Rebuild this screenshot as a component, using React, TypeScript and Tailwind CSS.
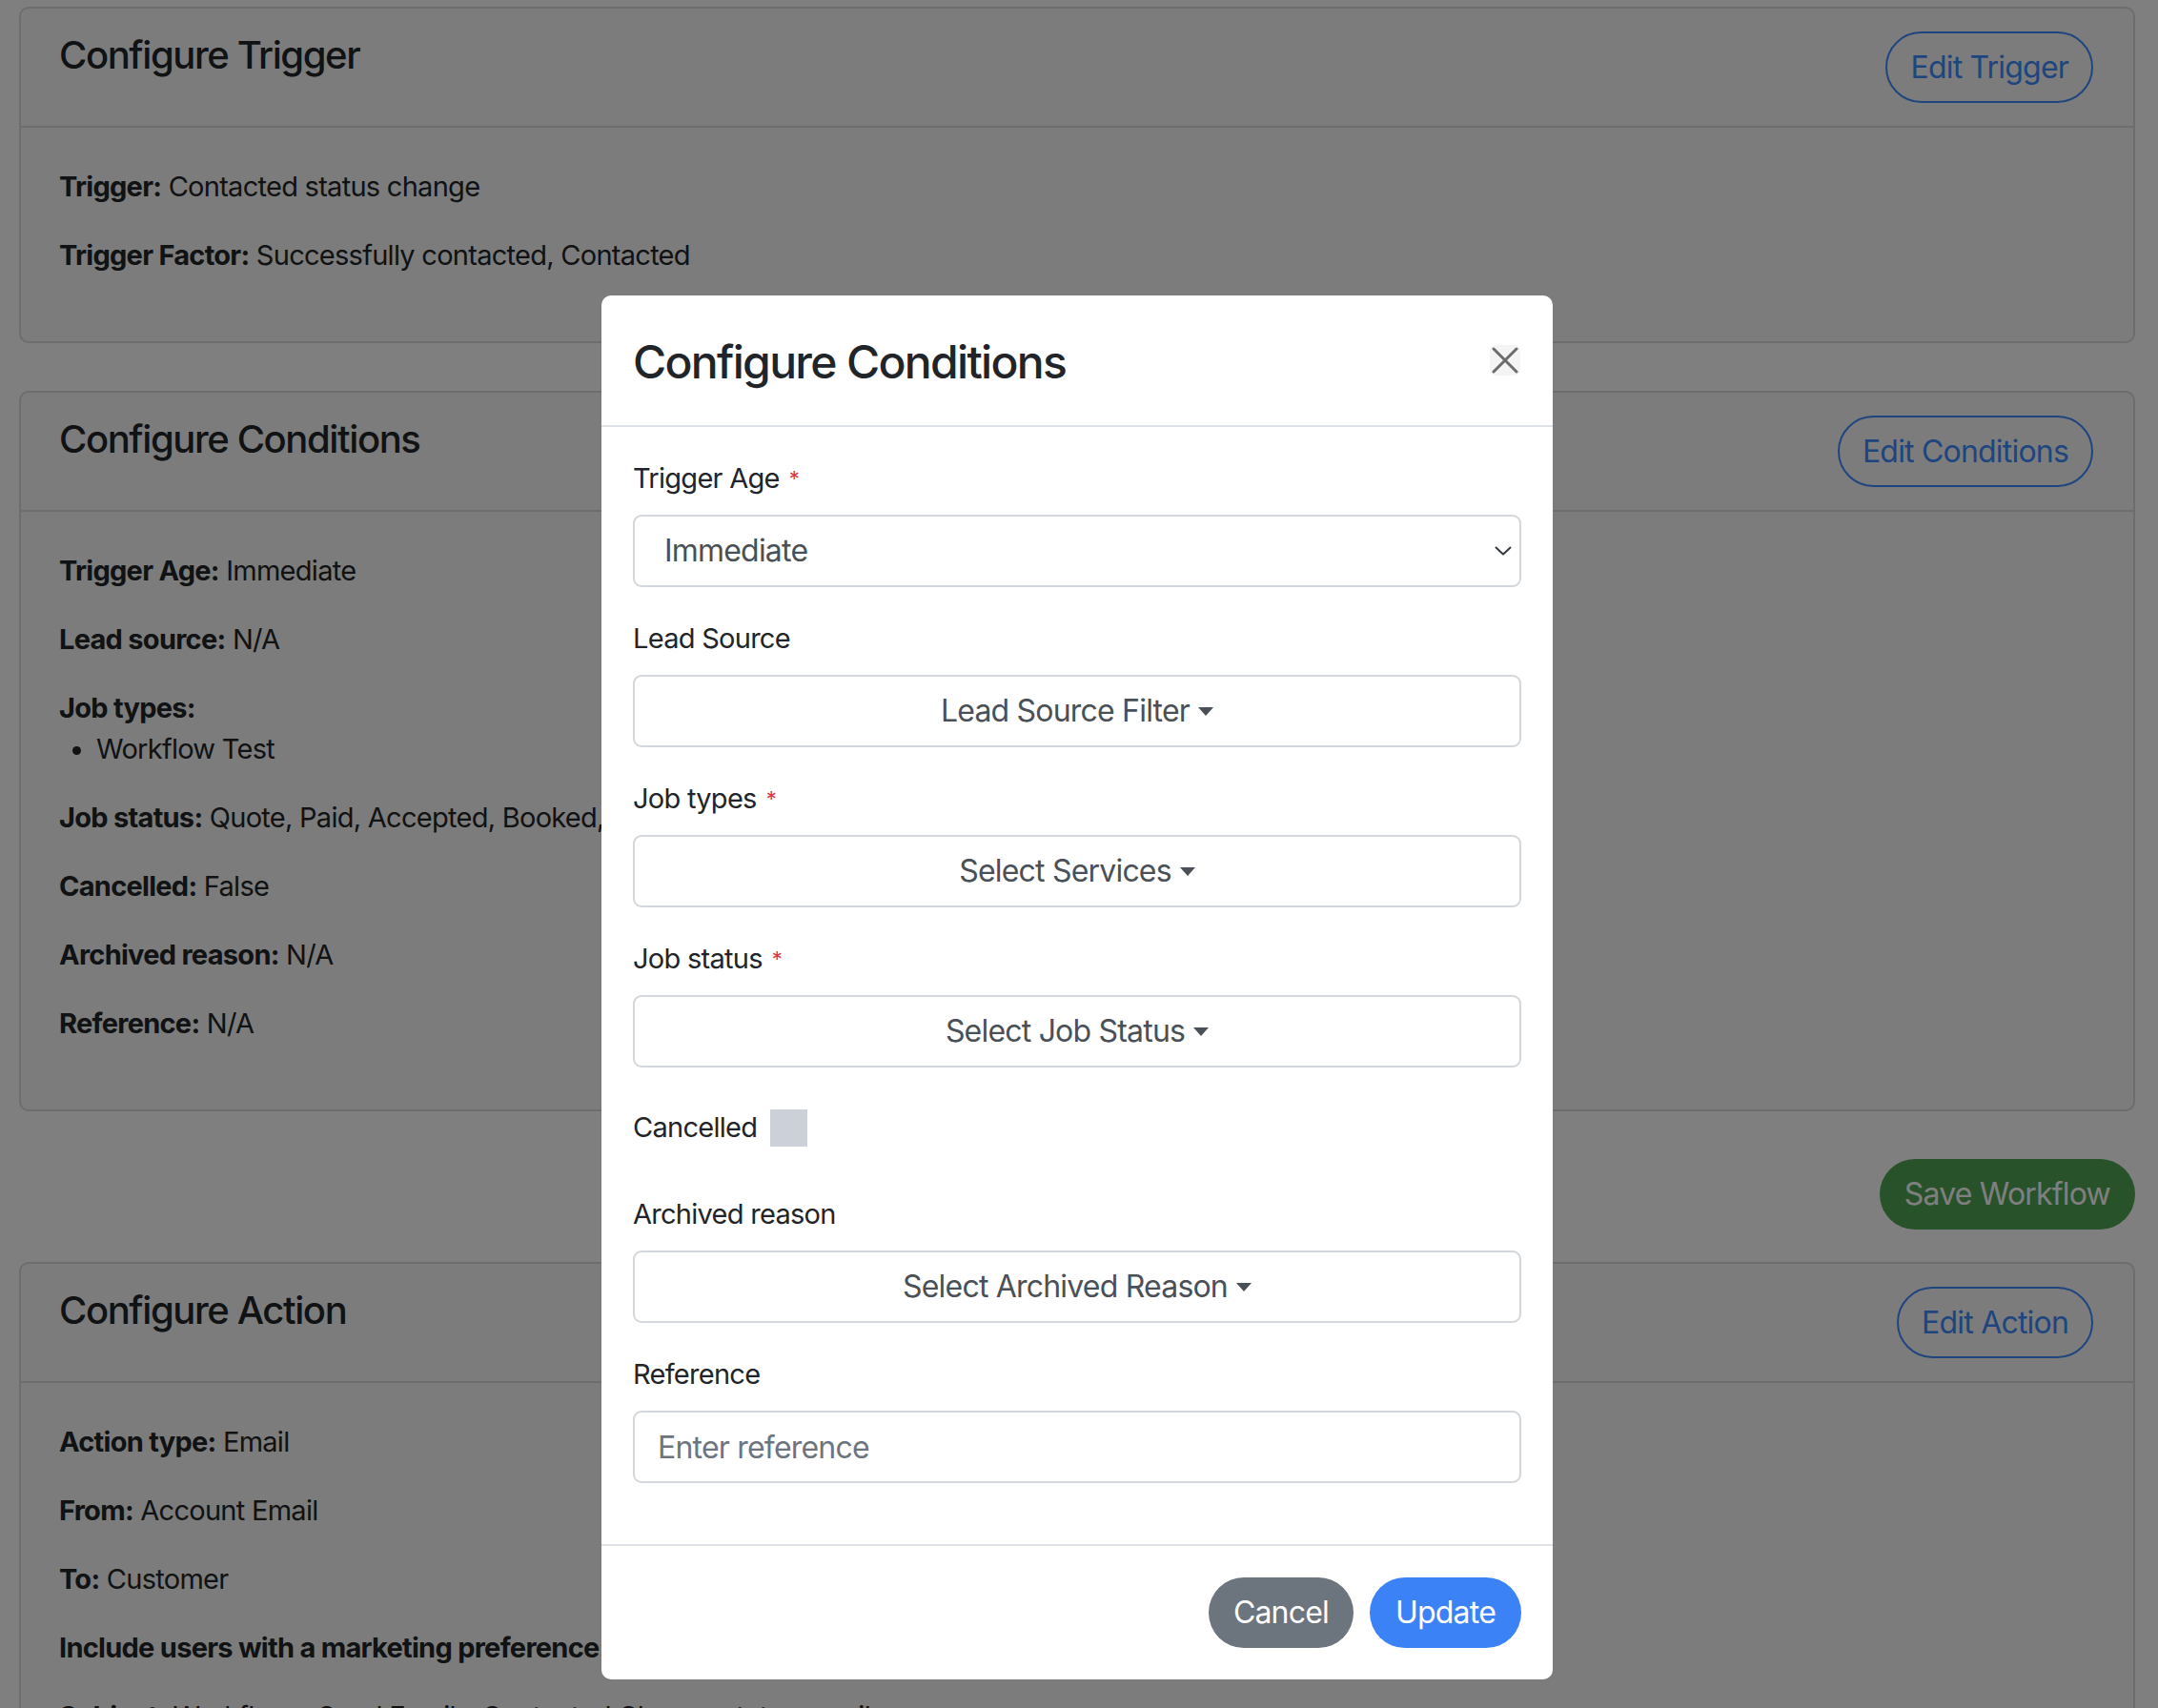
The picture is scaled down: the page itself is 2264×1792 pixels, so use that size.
import { ReactNode } from "react";

interface CardProps {
  title: string;
  button: string;
  children: ReactNode;
  className?: string;
}

function Card({ title, button, children, className = "" }: CardProps) {
  return (
    <div
      className={`rounded-[10px] border-2 border-[#dadada] bg-[#f8f8f8] ${className}`}
    >
      <div className="flex items-start justify-between border-b-2 border-[#dadada] pl-[40px] pr-[42px] py-[24px]">
        <h4 className="text-[40px] leading-[50px] font-medium text-[#212529] tracking-[-0.035em]">
          {title}
        </h4>
        <button className="h-[75px] rounded-full border-2 border-[#3d8bfd] px-[24px] text-[32px] text-[#3d8bfd] tracking-[-0.025em]">
          {button}
        </button>
      </div>
      <div className="pl-[40px] pr-[42px] pt-[40px] pb-[40px] text-[29px] leading-[43px] text-[#212529] tracking-[-0.025em]">
        {children}
      </div>
    </div>
  );
}

function Line({ label, value }: { label: string; value?: string }) {
  return (
    <p className="mb-[29px] whitespace-nowrap">
      <strong className="font-bold">{label}</strong>
      {value ? ` ${value}` : null}
    </p>
  );
}

function Label({ text, required }: { text: string; required?: boolean }) {
  return (
    <div className="h-[44px] mb-[16px] text-[29px] leading-[44px] text-[#212529] tracking-[-0.025em]">
      {text}
      {required && (
        <span className="ml-[10px] text-[22px] align-top text-[#dc3545]">*</span>
      )}
    </div>
  );
}

function DropdownToggle({ text }: { text: string }) {
  return (
    <button className="flex h-[76px] w-full items-center justify-center rounded-[9px] border-2 border-[#d3d7dc] bg-white text-[32px] text-[#495057] tracking-[-0.025em]">
      {text}
      <span className="ml-[9px] inline-block h-0 w-0 border-x-[8px] border-t-[9px] border-x-transparent border-t-[#495057]" />
    </button>
  );
}

function Field({
  label,
  required,
  children,
}: {
  label: string;
  required?: boolean;
  children: ReactNode;
}) {
  return (
    <div className="mb-[32px]">
      <Label text={label} required={required} />
      {children}
    </div>
  );
}

export default function App() {
  return (
    <div className="relative h-[1792px] overflow-hidden bg-white font-['Inter','Liberation_Sans',sans-serif]">
      <div className="pl-[20px] pr-[24px] pt-[7px]">
        <Card title="Configure Trigger" button="Edit Trigger">
          <Line label="Trigger:" value="Contacted status change" />
          <Line
            label="Trigger Factor:"
            value="Successfully contacted, Contacted"
          />
        </Card>

        <Card
          title="Configure Conditions"
          button="Edit Conditions"
          className="mt-[50px]"
        >
          <Line label="Trigger Age:" value="Immediate" />
          <Line label="Lead source:" value="N/A" />
          <p>
            <strong className="font-bold">Job types:</strong>
          </p>
          <ul className="mb-[29px] list-disc pl-[39px]">
            <li>Workflow Test</li>
          </ul>
          <Line label="Job status:" value="Quote, Paid, Accepted, Booked," />
          <Line label="Cancelled:" value="False" />
          <Line label="Archived reason:" value="N/A" />
          <Line label="Reference:" value="N/A" />
        </Card>

        <div className="mt-[50px] flex justify-end">
          <button className="h-[74px] rounded-full bg-[#50a454] px-[26px] text-[32px] text-white tracking-[-0.025em]">
            Save Workflow
          </button>
        </div>

        <Card
          title="Configure Action"
          button="Edit Action"
          className="mt-[34px]"
        >
          <Line label="Action type:" value="Email" />
          <Line label="From:" value="Account Email" />
          <Line label="To:" value="Customer" />
          <Line label="Include users with a marketing preference:" value="No" />
          <Line
            label="Subject:"
            value="Workflow - Send Email - Contacted Change status email"
          />
        </Card>
      </div>

      {/* backdrop + modal */}
      <div className="absolute inset-0 flex justify-center bg-black/50 pt-[310px] pr-[4px]">
        <div className="h-fit w-[998px] rounded-[10px] bg-white">
          <div className="flex items-start justify-between border-b-2 border-[#dee2e6] pl-[33px] pr-[34px] pt-[39px] pb-[37px]">
            <h5 className="mt-[2px] text-[48px] leading-[58px] font-medium text-[#212529] tracking-[-0.035em]">
              Configure Conditions
            </h5>
            <button className="mt-[13px] flex h-[32px] w-[32px] items-center justify-center rounded-[6px] bg-[#f4f4f5]">
              <svg width="28" height="28" viewBox="0 0 28 28">
                <path
                  d="M2 2 L26 26 M26 2 L2 26"
                  stroke="#6b6b6b"
                  strokeWidth="3"
                  strokeLinecap="round"
                />
              </svg>
            </button>
          </div>

          <div className="px-[33px] pt-[32px] pb-[32px]">
            <Field label="Trigger Age" required>
              <div className="flex h-[76px] w-full items-center justify-between rounded-[9px] border-2 border-[#d3d7dc] bg-white pl-[31px] pr-[8px] text-[32px] text-[#495057] tracking-[-0.025em]">
                <span>Immediate</span>
                <svg width="18" height="10" viewBox="0 0 18 10">
                  <path
                    d="M1.5 1.5 L9 8.5 L16.5 1.5"
                    fill="none"
                    stroke="#343a40"
                    strokeWidth="2"
                    strokeLinecap="round"
                    strokeLinejoin="round"
                  />
                </svg>
              </div>
            </Field>
            <Field label="Lead Source">
              <DropdownToggle text="Lead Source Filter" />
            </Field>
            <Field label="Job types" required>
              <DropdownToggle text="Select Services" />
            </Field>
            <Field label="Job status" required>
              <DropdownToggle text="Select Job Status" />
            </Field>

            <div className="pt-[9px] pb-[47px]">
              <div className="flex h-[44px] items-center text-[29px] leading-[44px] text-[#212529] tracking-[-0.025em]">
                <span>Cancelled</span>
                <span className="ml-[14px] h-[39px] w-[39px] bg-[#ccd1d9]" />
              </div>
            </div>

            <Field label="Archived reason">
              <DropdownToggle text="Select Archived Reason" />
            </Field>
            <Field label="Reference">
              <input
                placeholder="Enter reference"
                className="h-[76px] w-full rounded-[9px] border-2 border-[#d3d7dc] bg-white px-[24px] text-[32px] text-[#495057] tracking-[-0.025em] placeholder:text-[#6c757d] outline-none"
              />
            </Field>
          </div>

          <div className="flex justify-end gap-[17px] border-t-2 border-[#dee2e6] px-[33px] py-[33px]">
            <button className="h-[74px] rounded-full bg-[#6c757d] px-[26px] text-[32px] text-white tracking-[-0.025em]">
              Cancel
            </button>
            <button className="h-[74px] rounded-full bg-[#3b82f6] px-[27px] text-[32px] text-white tracking-[-0.025em]">
              Update
            </button>
          </div>
        </div>
      </div>
    </div>
  );
}
